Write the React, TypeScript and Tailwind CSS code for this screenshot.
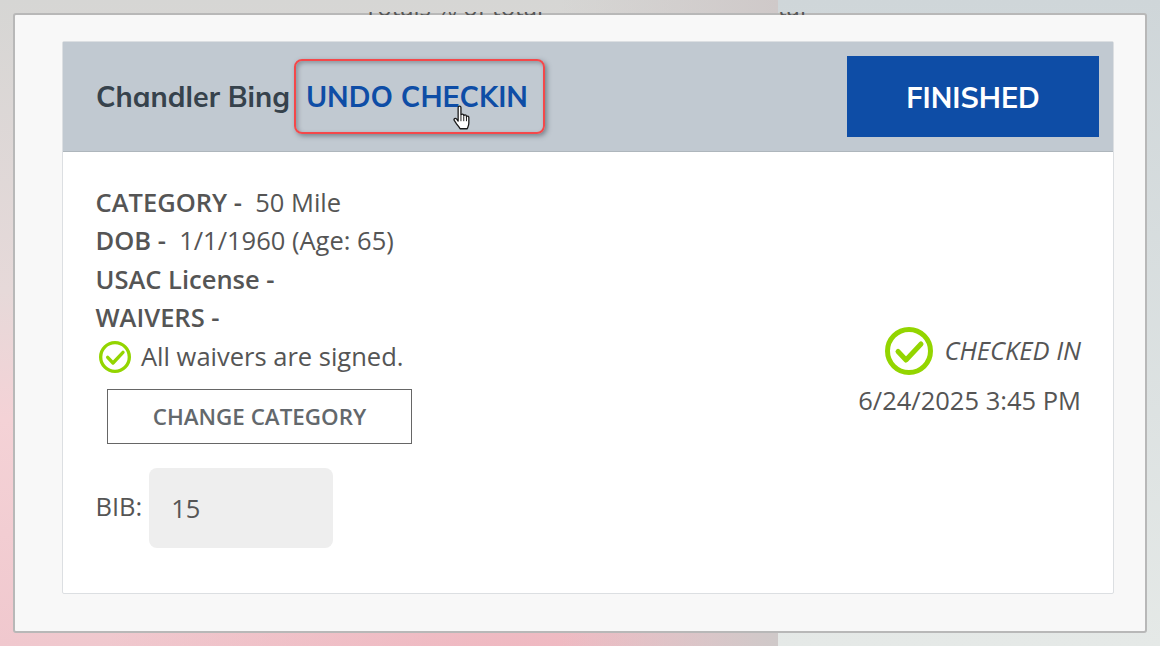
import React from 'react';

function CheckCircle({ size, stroke }: { size: number; stroke: number }) {
  return (
    <svg width={size} height={size} viewBox="0 0 48 48" fill="none" className="shrink-0">
      <circle cx="24" cy="24" r={24 - stroke / 2} stroke="#93d500" strokeWidth={stroke} />
      <path d="M13 24.5l8 8.5 15-16" stroke="#93d500" strokeWidth={stroke} strokeLinecap="round" strokeLinejoin="round" />
    </svg>
  );
}

function HandCursor() {
  return (
    <svg width="20" height="27" viewBox="0 0 18 25" className="absolute left-[453px] top-[105px]">
      <path
        d="M4.5 2.2c0-1.6 2.6-1.6 2.6 0v7.2c.2-1.4 2.5-1.3 2.6.1v.5c.3-1.2 2.3-1.1 2.5.2v.8c.4-1 2.1-.8 2.2.5v5.2c0 2.6-.9 3.8-1.5 5.3H6.3c-.8-1.6-2-2.8-3.3-4.6L.9 14.300c-.8-1.400 1-2.600 2.100-1.400l1.500 1.900z"
        fill="#fff"
        stroke="#1a1a1a"
        strokeWidth="1.200"
        strokeLinejoin="round"
      />
      <path d="M7.100 10v5M9.700 10.500v4.500M12.200 11v4" stroke="#1a1a1a" strokeWidth="0.900" />
    </svg>
  );
}

export default function App() {
  return (
    <div className="relative h-[646px] w-[1160px] overflow-hidden font-['Open_Sans',sans-serif]">
      {/* page behind the dialog */}
      <div className="flex h-full">
        <div className="h-full w-[778px] bg-[linear-gradient(90deg,transparent_72%,#cfc9c9_100%),radial-gradient(ellipse_420px_200px_at_520px_680px,#efb6bf,transparent),linear-gradient(180deg,#d6d6d4_0%,#e6d9d9_45%,#f4d2d6_65%,#f0c8ce_100%)]" />
        <div className="h-full flex-1 bg-[linear-gradient(180deg,#cfd6d9_0%,#e5e9e7_100%)]" />
      </div>

      {/* dialog */}
      <div className="absolute inset-[13px] rounded-[3px] border-2 border-[#b8b8b8] bg-[#f8f8f8] pl-[47px] pr-[31px] pt-[26px]">
        <div className="h-[553px] rounded-[2px] border border-[#dcdfe2] bg-white">
          <div className="flex h-[110px] items-center justify-between border-b border-[#aeb6bc] bg-[#c1c9d1] pl-[33px] pr-[14px] font-['Mulish','Lato',sans-serif]">
            <div className="flex items-center">
              <span className="text-[28.600px] font-bold text-[#36424c]">Chandler Bing</span>
              <span className="ml-[4px] flex h-[75px] w-[251px] items-center rounded-[8px] border-2 border-[#f4484a] pl-[10px] text-[28.600px] font-bold text-[#0e4da6] shadow-[2px_2px_5px_rgba(60,70,80,0.55),inset_2px_2px_4px_rgba(60,70,80,0.4)]">
                UNDO CHECKIN
              </span>
            </div>
            <button className="h-[81px] w-[252px] bg-[#0e4da6] pt-[2px] text-[28.600px] font-bold text-white">FINISHED</button>
          </div>
          <div className="flex justify-between pl-[32.500px] pr-[32px] pt-[31px] text-[25.500px] leading-[38.400px] text-[#555]">
            <div>
              <div><b className="font-semibold">CATEGORY - </b>&nbsp;50 Mile</div>
              <div><b className="font-semibold">DOB - </b>&nbsp;1/1/1960 (Age: 65)</div>
              <div><b className="font-semibold">USAC License -</b></div>
              <div><b className="font-semibold">WAIVERS -</b></div>
              <div className="flex items-center gap-[10px] pl-[3.500px]">
                <CheckCircle size={32} stroke={5} />
                <span className="pb-[2px]">All waivers are signed.</span>
              </div>
              <button className="ml-[11.500px] mt-[12px] flex h-[55px] w-[305px] items-center justify-center border border-[#666] pt-[2px] text-[22.400px] font-semibold text-[#63686c]">
                CHANGE CATEGORY
              </button>
              <div className="mt-[24px] flex items-center">
                <span className="mb-[4px]">BIB:</span>
                <div className="ml-[6.500px] flex h-[80px] w-[184px] items-center rounded-[8px] bg-[#eeeeee] pl-[22.500px]">15</div>
              </div>
            </div>
            <div className="flex flex-col items-end pt-[144px]">
              <div className="flex items-center gap-[12px]">
                <CheckCircle size={48} stroke={5} />
                <i className="pb-[2px]">CHECKED IN</i>
              </div>
              <div className="mt-[6px]">6/24/2025 3:45 PM</div>
            </div>
          </div>
        </div>
      </div>

      {/* text of the page behind, showing through the dialog's top edge */}
      <div className="absolute left-[364px] top-[12px] h-[3px] w-[182px] overflow-hidden">
        <div className="mt-[-21px] whitespace-nowrap text-[24px] leading-[32px] text-[#555]">Totals % of total</div>
      </div>
      <div className="absolute left-[778px] top-[12px] h-[3px] w-[40px] overflow-hidden">
        <div className="mt-[-21px] whitespace-nowrap text-[24px] leading-[32px] text-[#555]">tal</div>
      </div>
      <HandCursor />
    </div>
  );
}
